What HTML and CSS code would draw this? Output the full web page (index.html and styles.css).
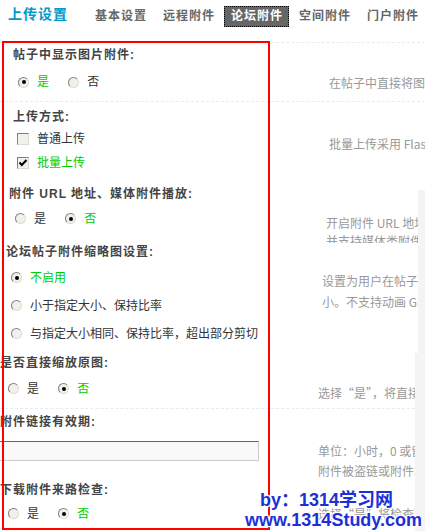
FILE: index.html
```html
<!DOCTYPE html>
<html lang="zh-CN">
<head>
  <meta charset="UTF-8">
  <title>上传设置</title>
  <meta name="viewport" content="width=device-width, initial-scale=1.0">
  <link rel="stylesheet" href="styles.css">
</head>
<body>
  <div class="head">
    <h1 class="title">上传设置</h1>
    <ul class="tabs">
      <li>基本设置</li>
      <li>远程附件</li>
      <li class="cur">论坛附件</li>
      <li>空间附件</li>
      <li>门户附件</li>
    </ul>
  </div>

  <div class="main">
    <div class="sec s1 pos-a">
      <div class="lbl">帖子中显示图片附件:</div>
      <div class="row">
        <div class="ctl">
          <label class="opt"><span class="rd on"></span><span class="ok">是</span></label>
          <label class="opt"><span class="rd"></span>否</label>
        </div>
        <div class="tip">在帖子中直接将图片或动画附件显示出来，而不需要点击附件链接</div>
      </div>
    </div>

    <div class="sec s2 pos-a">
      <div class="lbl">上传方式:</div>
      <div class="row">
        <div class="ctl">
          <label class="opt line"><span class="cb"></span>普通上传</label>
          <label class="opt line"><span class="cb"><svg width="10" height="10" viewBox="0 0 10 10"><path d="M1.5 4.5 L3.8 7 L8.5 2" fill="none" stroke="#000" stroke-width="2"/></svg></span><span class="ok">批量上传</span></label>
        </div>
        <div class="tip">批量上传采用 Flash 上传组件，可一次选择多个附件</div>
      </div>
    </div>

    <div class="sec s3 pos-b">
      <div class="lbl">附件 URL 地址、媒体附件播放:</div>
      <div class="row">
        <div class="ctl">
          <label class="opt"><span class="rd"></span>是</label>
          <label class="opt"><span class="rd on"></span><span class="ok">否</span></label>
        </div>
        <div class="tip">开启附件 URL 地址后，<br>并支持媒体类附件播放</div>
      </div>
    </div>

    <div class="sec s4 pos-c">
      <div class="lbl">论坛帖子附件缩略图设置:</div>
      <div class="row">
        <div class="ctl">
          <label class="opt line"><span class="rd on"></span><span class="ok">不启用</span></label>
          <label class="opt line"><span class="rd"></span>小于指定大小、保持比率</label>
          <label class="opt line"><span class="rd"></span>与指定大小相同、保持比率，超出部分剪切</label>
        </div>
        <div class="tip">设置为用户在帖子中上传的图片附件自动生成缩略图的大<br>小。不支持动画 GIF 格式</div>
      </div>
    </div>

    <div class="sec s5 pos-d">
      <div class="lbl">是否直接缩放原图:</div>
      <div class="row">
        <div class="ctl">
          <label class="opt"><span class="rd"></span>是</label>
          <label class="opt"><span class="rd on"></span><span class="ok">否</span></label>
        </div>
        <div class="tip">选择“是”，将直接缩放原图而不生成缩略图</div>
      </div>
    </div>

    <div class="sec s6 pos-d">
      <div class="lbl">附件链接有效期:</div>
      <div class="row">
        <div class="ctl">
          <input class="txt" type="text">
        </div>
        <div class="tip">单位：小时，0 或留空表示永久有效<br>附件被盗链或附件地址被转发后</div>
      </div>
    </div>

    <div class="sec s7 pos-d">
      <div class="lbl">下载附件来路检查:</div>
      <div class="row">
        <div class="ctl">
          <label class="opt"><span class="rd"></span>是</label>
          <label class="opt"><span class="rd on"></span><span class="ok">否</span></label>
        </div>
        <div class="tip">选择“是”将检查下载附件的来路</div>
      </div>
    </div>

    <div class="band band-top"></div>
    <div class="band band-low"></div>
  </div>

  <div class="mark-box"></div>
  <div class="watermark">
    <div class="wm-by">by：1314学习网</div>
    <div>www.1314Study.com</div>
  </div>
</body>
</html>
```

FILE: styles.css
```css
* {
  box-sizing: border-box;
}

body {
  margin: 0;
  background: #fff;
  font-family: "Liberation Sans", "Noto Sans CJK SC", sans-serif;
  font-size: 12px;
  color: #333;
  width: 425px;
  height: 531px;
  overflow: hidden;
  position: relative;
}

/* header */
.head {
  display: flex;
  align-items: flex-start;
  height: 43px;
  padding-top: 6px;
  border-bottom: 1px dashed #deeffb;
}

.title {
  flex: none;
  width: 88px;
  margin: 0;
  padding-left: 8px;
  font-size: 14px;
  line-height: 16px;
  letter-spacing: 1px;
  color: #0099cc;
  white-space: nowrap;
}

.tabs {
  display: flex;
  flex: none;
  gap: 3px;
  margin: 0;
  padding: 0;
  list-style: none;
}

.tabs li {
  flex: none;
  padding: 0 5px 0 6px;
  border: 1px solid transparent;
  line-height: 19px;
  font-weight: bold;
  letter-spacing: 1px;
  color: #666;
  white-space: nowrap;
}

.tabs li.cur {
  background: #666;
  color: #fff;
  border: 1px dotted #000;
}

/* form rows */
.main {
  position: relative;
  height: 488px;
  overflow: hidden;
}

.lbl {
  line-height: 18px;
  font-weight: bold;
  letter-spacing: 1px;
  color: #444;
  white-space: nowrap;
}

.row {
  display: flex;
  align-items: flex-start;
}

.ctl {
  flex: none;
  white-space: nowrap;
}

.tip {
  flex: 1;
  min-width: 0;
  overflow: hidden;
  white-space: nowrap;
  font-family: "Noto Sans CJK SC", "Liberation Sans", sans-serif;
  color: #999;
}

.opt {
  display: inline-flex;
  align-items: center;
  margin-right: 16px;
}

.opt.line {
  display: flex;
}

.ok {
  color: #00cc00;
}

.rd {
  position: relative;
  display: inline-block;
  width: 11px;
  height: 11px;
  margin-right: 8px;
  border: 1px solid;
  border-color: #808080 #dcdcd4 #dcdcd4 #808080;
  border-radius: 50%;
  background: #f1f0ea;
}

.rd.on::after {
  content: "";
  position: absolute;
  left: 2.5px;
  top: 2.5px;
  width: 4px;
  height: 4px;
  border-radius: 50%;
  background: #000;
}

.cb {
  display: inline-flex;
  align-items: center;
  justify-content: center;
  width: 12px;
  height: 12px;
  margin-right: 8px;
  border: 1px solid;
  border-color: #808080 #dcdcd4 #dcdcd4 #808080;
  background: #f1f0ea;
}

.txt {
  display: block;
  width: 269px;
  height: 20px;
  margin: 0 0 0 -18px;
  border: 1px solid;
  border-color: #666 #ccc #ccc #777;
  background: #f9f9f9;
}

/* horizontal placement of each block */
.pos-a .lbl { padding-left: 13px; }
.pos-a .ctl { width: 329px; padding-left: 18px; }
.s2 .ctl { padding-left: 17px; }

.pos-b .lbl { padding-left: 9px; }
.pos-b .ctl { width: 326px; padding-left: 15px; }
.pos-b .tip { margin-right: 2px; }

.pos-c .lbl { padding-left: 6px; }
.pos-c .ctl { width: 322px; padding-left: 11px; }
.pos-c .tip { margin-right: 7px; }

.pos-d .lbl { padding-left: 0; }
.pos-d .ctl { width: 318px; padding-left: 8px; }
.pos-d .tip { margin-right: 10px; }

/* vertical rhythm of each block */
.s1 {
  padding: 3px 0 6px;
  border-bottom: 1px dashed #deeffb;
}
.s1 .row { margin-top: 7px; }
.s1 .ctl { line-height: 22px; }
.s1 .tip { padding-top: 1px; line-height: 22px; }

.s2 .lbl { padding-top: 6px; }
.s2 .row { margin-top: 1px; }
.s2 .ctl { line-height: 24px; }
.s2 .tip { padding-top: 6px; line-height: 22px; }

.s3 .lbl { margin-top: 10px; }
.s3 .row { margin-top: 5px; }
.s3 .ctl { line-height: 22px; }
.s3 .tip { height: 35px; padding-top: 6px; line-height: 18px; }

.s4 .row { margin-top: 3px; }
.s4 .ctl { line-height: 28px; }
.s4 .tip { padding-top: 6px; line-height: 21px; }

.s5 {
  padding-bottom: 4px;
  border-bottom: 1px dashed #deeffb;
}
.s5 .lbl { margin-top: 6px; }
.s5 .row { margin-top: 6px; }
.s5 .ctl { line-height: 22px; }
.s5 .tip { padding-top: 4px; line-height: 22px; }

.s6 .lbl { margin-top: 4px; }
.s6 .row { margin-top: 10px; }
.s6 .tip { line-height: 20px; }

.s7 .row { margin-top: 4px; }
.s7 .ctl { line-height: 22px; }
.s7 .tip { line-height: 22px; }

/* light strip on the right edge */
.band {
  position: absolute;
  right: 0;
  background: #f4f4f4;
}

.band-top {
  top: 147px;
  width: 7px;
  height: 163px;
}

.band-low {
  top: 310px;
  bottom: 0;
  width: 10px;
}

/* red annotation frame */
.mark-box {
  position: absolute;
  left: 2px;
  top: 41px;
  width: 268px;
  height: 489px;
  border: 2px solid #ff0000;
}

.watermark {
  position: absolute;
  left: 245px;
  top: 490px;
  font-family: "Liberation Sans", "Noto Sans CJK SC", sans-serif;
  font-size: 18px;
  font-weight: bold;
  line-height: 20px;
  color: #1d30d8;
  white-space: nowrap;
  text-shadow: 1px 1px 0 #fff, -1px -1px 0 #fff, 1px -1px 0 #fff, -1px 1px 0 #fff, 0 0 3px #fff;
}

.wm-by {
  padding-left: 15px;
}
```
